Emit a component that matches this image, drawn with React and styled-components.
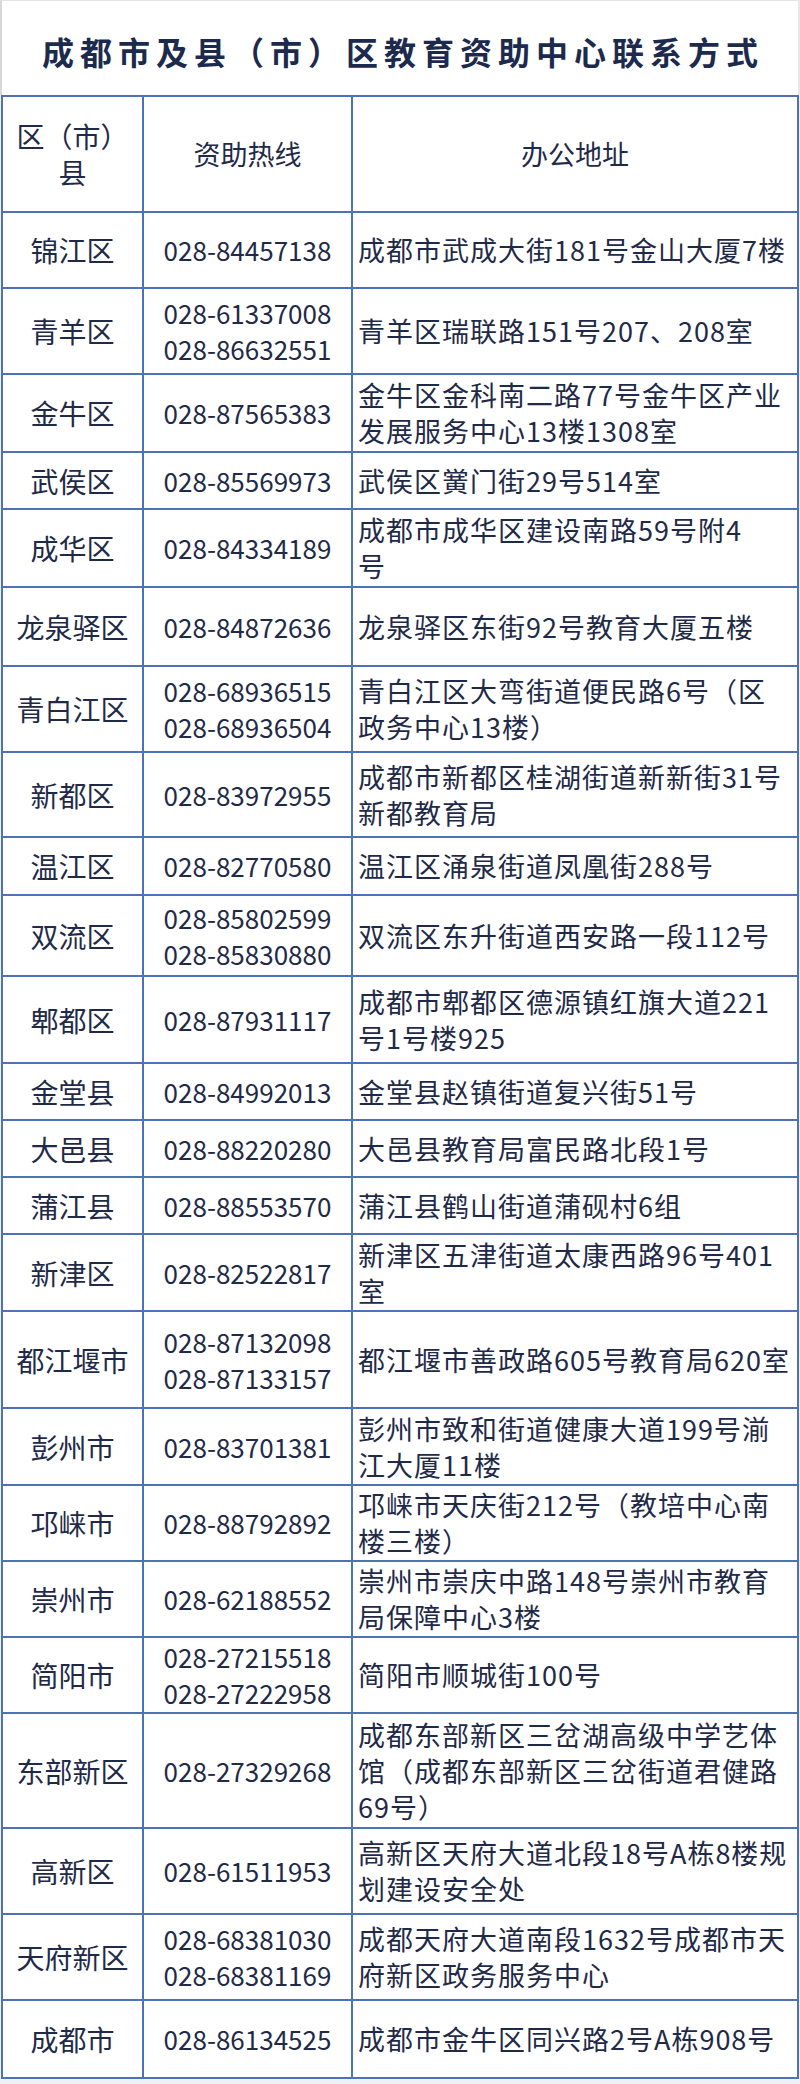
import styled, { createGlobalStyle } from "styled-components";

const GlobalStyle = createGlobalStyle`
  html, body {
    margin: 0;
    padding: 0;
    background: #eef1f6;
  }
  body {
    font-family: "Noto Sans CJK SC", "Noto Sans", sans-serif;
    color: #1f2a48;
  }
`;

const Page = styled.div`
  width: 800px;
  min-height: 2084px;
  background: #eef1f6;
`;

const TitleBar = styled.div`
  display: flex;
  justify-content: center;
  align-items: center;
  height: 95px;
  box-sizing: border-box;
  padding: 6px 0 0 6px;
  background: #fff;
  border-top: 1px solid #e2e4e8;
  border-left: 2px solid #d6d8dc;
  border-right: 2px solid #e6e8ec;
  color: #1c2a4d;
  font: 700 32px "Noto Sans CJK SC", sans-serif;
  letter-spacing: 6px;
`;

const Table = styled.div`
  width: 796px;
  margin-left: 1px;
  background: #fff;
  border-top: 2px solid #4d73b6;
  border-left: 2px solid #4d73b6;
`;

const Row = styled.div`
  display: grid;
  grid-template-columns: 141px 209px 1fr;
  height: ${(p) => p.$h}px;
  box-sizing: border-box;
`;

const Cell = styled.div`
  display: flex;
  flex-direction: column;
  justify-content: center;
  align-items: ${(p) => (p.$left ? "flex-start" : "center")};
  padding-left: ${(p) => (p.$left ? "5px" : "0")};
  box-sizing: border-box;
  border-right: 2px solid #4d73b6;
  border-bottom: 2px solid #4d73b6;
  font-size: 27px;
  line-height: 36px;
  white-space: nowrap;
  overflow: hidden;
  text-align: center;
`;

const Line = styled.span`
  display: block;
`;

const Name = styled(Line)`
  font-size: 28px;
`;

const Phone = styled(Line)`
  font-size: 26px;
`;

const Address = styled(Line)`
  letter-spacing: 1px;
`;

const rows = [
  { h: 76, name: "锦江区", tel: ["028-84457138"], addr: ["成都市武成大街181号金山大厦7楼"] },
  { h: 86, name: "青羊区", tel: ["028-61337008", "028-86632551"], addr: ["青羊区瑞联路151号207、208室"] },
  { h: 78, name: "金牛区", tel: ["028-87565383"], addr: ["金牛区金科南二路77号金牛区产业", "发展服务中心13楼1308室"] },
  { h: 57, name: "武侯区", tel: ["028-85569973"], addr: ["武侯区黉门街29号514室"] },
  { h: 78, name: "成华区", tel: ["028-84334189"], addr: ["成都市成华区建设南路59号附4", "号"] },
  { h: 79, name: "龙泉驿区", tel: ["028-84872636"], addr: ["龙泉驿区东街92号教育大厦五楼"] },
  { h: 86, name: "青白江区", tel: ["028-68936515", "028-68936504"], addr: ["青白江区大弯街道便民路6号（区", "政务中心13楼）"] },
  { h: 85, name: "新都区", tel: ["028-83972955"], addr: ["成都市新都区桂湖街道新新街31号", "新都教育局"] },
  { h: 58, name: "温江区", tel: ["028-82770580"], addr: ["温江区涌泉街道凤凰街288号"] },
  { h: 81, name: "双流区", tel: ["028-85802599", "028-85830880"], addr: ["双流区东升街道西安路一段112号"] },
  { h: 87, name: "郫都区", tel: ["028-87931117"], addr: ["成都市郫都区德源镇红旗大道221", "号1号楼925"] },
  { h: 57, name: "金堂县", tel: ["028-84992013"], addr: ["金堂县赵镇街道复兴街51号"] },
  { h: 57, name: "大邑县", tel: ["028-88220280"], addr: ["大邑县教育局富民路北段1号"] },
  { h: 57, name: "蒲江县", tel: ["028-88553570"], addr: ["蒲江县鹤山街道蒲砚村6组"] },
  { h: 77, name: "新津区", tel: ["028-82522817"], addr: ["新津区五津街道太康西路96号401", "室"] },
  { h: 97, name: "都江堰市", tel: ["028-87132098", "028-87133157"], addr: ["都江堰市善政路605号教育局620室"] },
  { h: 77, name: "彭州市", tel: ["028-83701381"], addr: ["彭州市致和街道健康大道199号湔", "江大厦11楼"] },
  { h: 76, name: "邛崃市", tel: ["028-88792892"], addr: ["邛崃市天庆街212号（教培中心南", "楼三楼）"] },
  { h: 76, name: "崇州市", tel: ["028-62188552"], addr: ["崇州市崇庆中路148号崇州市教育", "局保障中心3楼"] },
  { h: 76, name: "简阳市", tel: ["028-27215518", "028-27222958"], addr: ["简阳市顺城街100号"] },
  { h: 115, name: "东部新区", tel: ["028-27329268"], addr: ["成都东部新区三岔湖高级中学艺体", "馆（成都东部新区三岔街道君健路", "69号）"] },
  { h: 86, name: "高新区", tel: ["028-61511953"], addr: ["高新区天府大道北段18号A栋8楼规", "划建设安全处"] },
  { h: 86, name: "天府新区", tel: ["028-68381030", "028-68381169"], addr: ["成都天府大道南段1632号成都市天", "府新区政务服务中心"] },
  { h: 78, name: "成都市", tel: ["028-86134525"], addr: ["成都市金牛区同兴路2号A栋908号"] }
];

function App() {
  return (
    <Page>
      <GlobalStyle />
      <TitleBar>成都市及县（市）区教育资助中心联系方式</TitleBar>

      <Table>
        {/* 表头 */}
        <Row $h={116}>
          <Cell>
            <Name>区（市）</Name>
            <Name>县</Name>
          </Cell>
          <Cell>资助热线</Cell>
          <Cell>办公地址</Cell>
        </Row>

        {rows.map((r) => (
          <Row key={r.name} $h={r.h}>
            <Cell>
              <Name>{r.name}</Name>
            </Cell>
            <Cell>
              {r.tel.map((t) => (
                <Phone key={t}>{t}</Phone>
              ))}
            </Cell>
            <Cell $left>
              {r.addr.map((a, i) => (
                <Address key={i}>{a}</Address>
              ))}
            </Cell>
          </Row>
        ))}
      </Table>
    </Page>
  );
}

export default App;
